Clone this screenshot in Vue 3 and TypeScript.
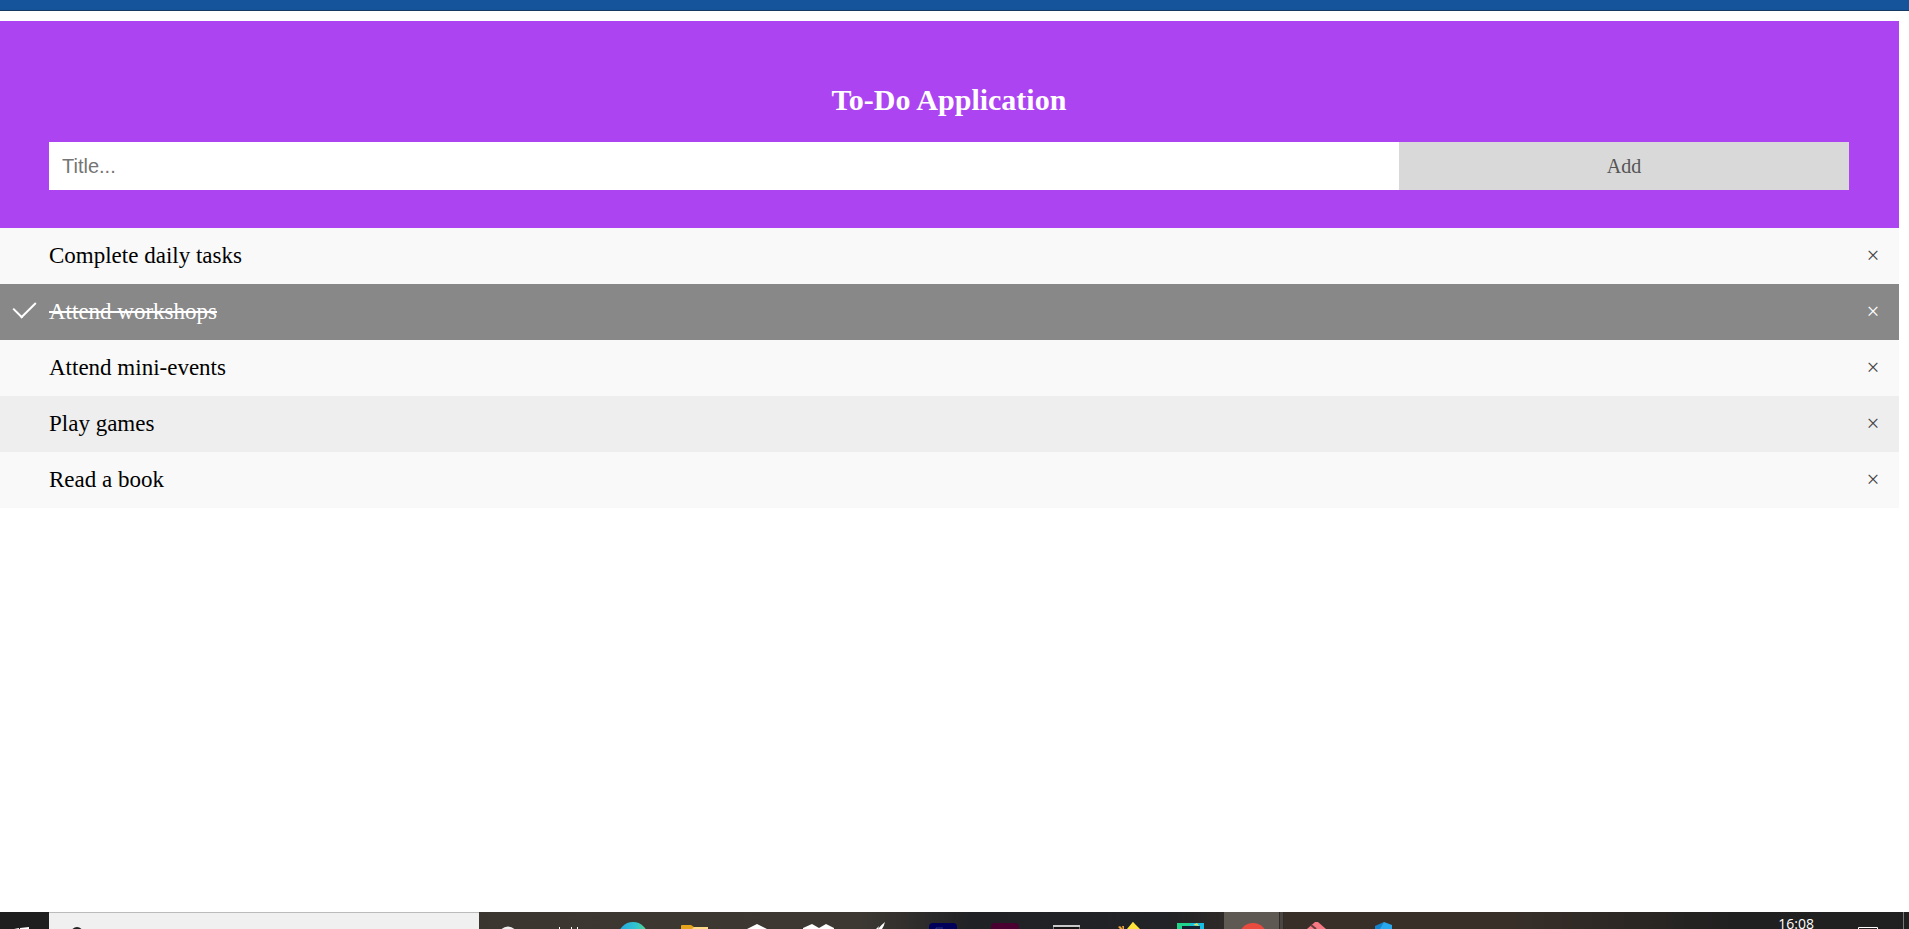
<script setup lang="ts">
import { ref } from 'vue'

interface Task {
  id: number
  text: string
  done: boolean
}

const tasks = ref<Task[]>([
  { id: 1, text: 'Complete daily tasks', done: false },
  { id: 2, text: 'Attend workshops', done: true },
  { id: 3, text: 'Attend mini-events', done: false },
  { id: 4, text: 'Play games', done: false },
  { id: 5, text: 'Read a book', done: false },
])

const title = ref('')
let nextId = 6

function addTask() {
  const text = title.value.trim()
  if (!text) return
  tasks.value.push({ id: nextId++, text, done: false })
  title.value = ''
}

function removeTask(id: number) {
  tasks.value = tasks.value.filter((task) => task.id !== id)
}
</script>

<template>
  <div class="screen">
    <div class="window-bar"></div>

    <main class="page">
      <header class="header">
        <h2 class="heading">To-Do Application</h2>
        <form class="add-form" @submit.prevent="addTask">
          <input v-model="title" class="title-input" type="text" placeholder="Title..." aria-label="Title" />
          <button class="add-button" type="submit">Add</button>
        </form>
      </header>

      <ul class="list">
        <li v-for="task in tasks" :key="task.id" class="item" :class="{ done: task.done }">
          <input :id="`task-${task.id}`" v-model="task.done" class="check" type="checkbox" />
          <label class="text" :for="`task-${task.id}`">{{ task.text }}</label>
          <button class="close" type="button" :aria-label="`Remove ${task.text}`" @click="removeTask(task.id)">×</button>
        </li>
      </ul>
    </main>

    <footer class="taskbar">
      <button class="start" type="button" aria-label="Start">
        <svg width="49" height="17" viewBox="0 0 49 17"><path d="M14 17L19 16V17ZM20 16L29 15V17H20Z" fill="#fff" /></svg>
      </button>
      <div class="search">
        <svg width="50" height="16" viewBox="0 0 50 16"><circle cx="28" cy="20" r="5" fill="none" stroke="#222" stroke-width="2" /></svg>
        <input class="search-input" type="text" aria-label="Search" />
      </div>
      <nav class="apps" aria-label="Applications">
        <button class="app" type="button" aria-label="Assistant">
          <svg width="62" height="17" viewBox="0 0 62 17"><circle cx="30" cy="24" r="8" fill="none" stroke="#eee" stroke-width="3" /></svg>
        </button>
        <button class="app" type="button" aria-label="Task view">
          <svg width="62" height="17" viewBox="0 0 62 17"><path d="M19.500 15V17M31.500 15V17M37.500 15V17" stroke="#fff" /></svg>
        </button>
        <button class="app" type="button" aria-label="Browser">
          <svg width="62" height="17" viewBox="0 0 62 17">
            <defs><linearGradient id="wave"><stop offset="0" stop-color="#23a5df" /><stop offset=".6" stop-color="#32c4d2" /><stop offset="1" stop-color="#59d779" /></linearGradient></defs>
            <circle cx="31" cy="25" r="15" fill="url(#wave)" />
          </svg>
        </button>
        <button class="app" type="button" aria-label="Files">
          <svg width="62" height="17" viewBox="0 0 62 17"><path d="M17 17V14Q17 13 18 13H27L30 15V17Z" fill="#e6a51c" /><path d="M28 17L30 15H44V17Z" fill="#ffda87" /></svg>
        </button>
        <button class="app" type="button" aria-label="Store">
          <svg width="62" height="17" viewBox="0 0 62 17"><path d="M21 17L31 12L41 17Z" fill="#fff" /></svg>
        </button>
        <button class="app" type="button" aria-label="Cloud storage">
          <svg width="62" height="17" viewBox="0 0 62 17"><path d="M15 17V16L24 12L31 16L38 12L46 16V17Z" fill="#fff" /></svg>
        </button>
        <button class="app" type="button" aria-label="Notes">
          <svg width="62" height="17" viewBox="0 0 62 17"><path d="M28 17Q31 13 35 10Q34 14 32 17ZM26 17L29 14L28 17Z" fill="#fff" /></svg>
        </button>
        <button class="app" type="button" aria-label="Photo editor">
          <svg width="62" height="17" viewBox="0 0 62 17"><rect x="17" y="11" width="28" height="22" rx="4" fill="#00005b" /><path d="M24 17V16H31" fill="none" stroke="#303887" /></svg>
        </button>
        <button class="app" type="button" aria-label="Design editor">
          <svg width="62" height="17" viewBox="0 0 62 17"><rect x="17" y="11" width="28" height="22" rx="4" fill="#4b0032" /></svg>
        </button>
        <button class="app" type="button" aria-label="Terminal">
          <svg width="62" height="17" viewBox="0 0 62 17"><path d="M17 13H44V17H17Z" fill="#777" /><path d="M18 15H43V17H18Z" fill="#151515" /><path d="M17 14H44" stroke="#c8c8c8" stroke-width="2" /></svg>
        </button>
        <button class="app" type="button" aria-label="Sketch tool">
          <svg width="62" height="17" viewBox="0 0 62 17"><path d="M29 17L34 11Q35 9 36 11L42 17Z" fill="#ffe33b" /><path d="M20 15L22 14L25 17H22ZM24 14L26 14V17H25Z" fill="#eda53b" /></svg>
        </button>
        <button class="app" type="button" aria-label="Code editor">
          <svg width="62" height="17" viewBox="0 0 62 17"><path d="M17 11H32L28 17H17Z" fill="#20d58b" /><path d="M31 11H44V17H28Z" fill="#17bee4" /><path d="M33 13L37 11L39 14Z" fill="#d9e35a" /><path d="M22 14H40V17H22Z" fill="#123" /></svg>
        </button>
        <button class="app" type="button" aria-label="Web browser">
          <svg width="62" height="17" viewBox="0 0 62 17"><rect x="2" width="55" height="17" fill="#5f5954" /><rect x="57" width="5" height="17" fill="#4b4641" /><path d="M57.500 0V17M61.500 0V17" stroke="#302c29" /><circle cx="31" cy="25" r="14" fill="#e94b3e" /></svg>
        </button>
        <button class="app" type="button" aria-label="Version control">
          <svg width="62" height="17" viewBox="0 0 62 17"><path d="M23 17L31 10H34L42 17Z" fill="#f77983" /><path d="M27 13L32 17" stroke="#6d3b3c" stroke-width="2" /></svg>
        </button>
        <button class="app" type="button" aria-label="Developer tools">
          <svg width="62" height="17" viewBox="0 0 62 17"><path d="M29 17V14L38 10V17Z" fill="#1684cc" /><path d="M38 10L46 13V17H34Z" fill="#27a7ed" /></svg>
        </button>
      </nav>
      <div class="tray">
        <time class="clock">16:08</time>
        <button class="notice" type="button" aria-label="Notifications">
          <svg width="21" height="17" viewBox="0 0 21 17"><path d="M.5 17V15.500H19.500V17" fill="none" stroke="#fff" /></svg>
        </button>
        <div class="desktop-edge"></div>
      </div>
    </footer>
  </div>
</template>

<style>
body {
  margin: 0;
}
</style>

<style scoped>
* {
  box-sizing: border-box;
}
.screen {
  display: flex;
  flex-direction: column;
  height: 100vh;
  overflow: hidden;
  background: #fff;
  font-family: "Liberation Serif", "Times New Roman", serif;
}
.window-bar {
  flex: none;
  height: 11px;
  background: #15539a;
  border-bottom: 1px solid #153a61;
}
.page {
  flex: 1;
  min-height: 0;
  overflow: hidden;
  padding: 10px 10px 0 0;
}
button,
input {
  margin: 0;
  padding: 0;
  border: 0;
  border-radius: 0;
}
button {
  cursor: pointer;
}
svg {
  display: block;
}
.header {
  padding: 62px 50px 38px 49px;
  background: #ac44f2;
  color: #fff;
}
.heading {
  margin: 0 0 25px;
  font-size: 30px;
  line-height: 34px;
  text-align: center;
}
.add-form {
  display: flex;
  height: 48px;
}
.title-input {
  width: 75%;
  padding: 0 13px;
  background: #fff;
  font-family: "Liberation Sans", Arial, sans-serif;
  font-size: 20px;
}
.title-input::placeholder {
  color: #757575;
}
.add-button {
  width: 25%;
  background: #d9d9d9;
  color: #555;
  font-family: inherit;
  font-size: 20px;
}
.list {
  margin: 0;
  padding: 0;
  list-style: none;
}
.item {
  display: flex;
  height: 56px;
  background: #f9f9f9;
  color: #000;
  font-size: 23px;
}
.item:nth-child(even) {
  background: #eee;
}
.item.done {
  background: #888;
  color: #fff;
}
.check {
  display: flex;
  flex: none;
  align-items: center;
  justify-content: center;
  width: 49px;
  padding-bottom: 12px;
  appearance: none;
  cursor: pointer;
}
.check:checked::before {
  content: "";
  width: 11px;
  height: 19px;
  border: solid #fff;
  border-width: 0 2px 2px 0;
  transform: rotate(45deg);
}
.text {
  flex: 1;
  line-height: 56px;
  cursor: pointer;
}
.done .text {
  text-decoration: line-through;
}
.close {
  flex: none;
  width: 52px;
  background: transparent;
  color: #444;
  font-family: inherit;
  font-size: 23px;
}
.done .close {
  color: #fff;
}
.taskbar {
  display: flex;
  flex: none;
  height: 17px;
  overflow: hidden;
  background: linear-gradient(90deg, #1e1e1e 2%, #3b3630 26%, #3d3832 45%, #202125 51%, #222326 61%, #382f29 67%, #382f29 79%, #202020 91%);
}
.taskbar button {
  background: transparent;
}
.start {
  flex: none;
  width: 49px;
}
.search {
  display: flex;
  flex: none;
  width: 430px;
  border-top: 1px solid #bbb;
  background: #f0f0f0;
}
.search-input {
  flex: 1;
  min-width: 0;
  background: transparent;
}
.apps {
  display: flex;
  flex: 1;
  min-width: 0;
  margin-left: -1px;
  overflow: hidden;
}
.app {
  flex: none;
  width: 62px;
}
.tray {
  display: flex;
  flex: none;
}
.clock {
  height: 17px;
  padding-top: 6px;
  margin-right: 44px;
  color: #fff;
  font-family: "Open Sans", "Noto Sans", sans-serif;
  font-size: 14px;
  line-height: 11px;
}
.notice {
  width: 21px;
}
.desktop-edge {
  width: 6px;
  margin-left: 24px;
  border-left: 1px solid #777;
}
</style>
